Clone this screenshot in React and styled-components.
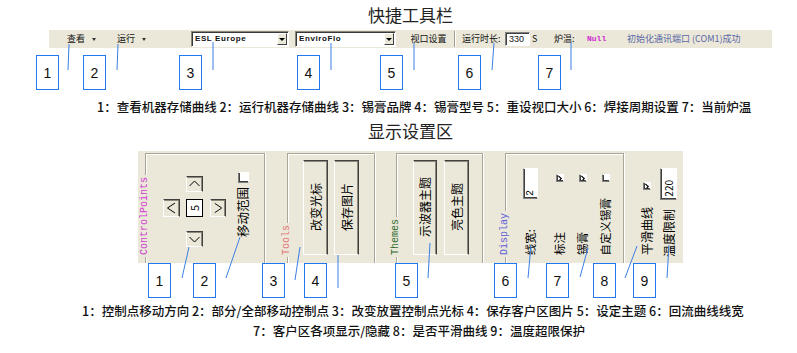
import React from 'react';
import styled, { createGlobalStyle } from 'styled-components';

const BEIGE = '#ebe8d9';
const CJK = '"Noto Sans CJK SC", "Liberation Sans", sans-serif';

const GlobalStyle = createGlobalStyle`
  html, body { margin: 0; padding: 0; background: #fff; }
  body { width: 797px; height: 353px; overflow: hidden; font-family: ${CJK}; color: #111; }
`;

const Page = styled.div`
  position: relative;
  width: 797px;
  height: 353px;
  display: flex;
  flex-direction: column;
`;

const Title = styled.h1`
  margin: ${p => p.$mt}px 0 0 0;
  padding-left: 24px;
  font-family: ${CJK};
  font-size: 17px;
  line-height: 17px;
  font-weight: 400;
  color: #222;
  text-align: center;
`;

const Caption = styled.p`
  margin: ${p => p.$mt}px 0 0 ${p => p.$ml}px;
  font-family: ${CJK};
  font-size: 12.5px;
  font-weight: 500;
  line-height: 14px;
  color: #111;
  white-space: nowrap;
`;

/* ---------- toolbar ---------- */
const Toolbar = styled.div`
  margin: 7px 0 0 49px;
  width: 723px;
  height: 18px;
  background: ${BEIGE};
  display: flex;
  align-items: center;
  font-size: 9px;
  line-height: 10px;
`;

const ToolItem = styled.div`
  flex: none;
  margin-left: ${p => p.$ml}px;
  width: ${p => (p.$w ? `${p.$w}px` : 'auto')};
  display: flex;
  align-items: center;
  justify-content: ${p => (p.$center ? 'center' : 'flex-start')};
  color: ${p => p.$color || '#111'};
  white-space: nowrap;
`;

const MenuArrow = styled.span`
  margin-left: 7px;
  width: 0;
  height: 0;
  border-left: 2px solid transparent;
  border-right: 2px solid transparent;
  border-top: 3px solid #333;
`;

const Combo = styled.div`
  flex: none;
  box-sizing: border-box;
  margin-left: ${p => p.$ml}px;
  width: ${p => p.$w}px;
  height: 16px;
  background: #fff;
  border: 1px solid;
  border-color: #8a887c #fff #fff #8a887c;
  box-shadow: inset 1px 1px 0 #3a3a3a;
  display: flex;
  align-items: center;
`;

const ComboText = styled.span`
  flex: 1;
  padding-left: 3px;
  font-family: "Liberation Sans", sans-serif;
  font-weight: 700;
  font-size: 8px;
  letter-spacing: 0.6px;
  color: #111;
`;

const ComboButton = styled.span`
  box-sizing: border-box;
  width: 10px;
  height: 12px;
  margin-right: 1px;
  background: ${BEIGE};
  border: 1px solid;
  border-color: #fff #404040 #404040 #fff;
  display: flex;
  align-items: center;
  justify-content: center;
  &::after {
    content: '';
    border-left: 3px solid transparent;
    border-right: 3px solid transparent;
    border-top: 3px solid #000;
  }
`;

const Separator = styled.span`
  flex: none;
  margin-left: ${p => p.$ml}px;
  width: 1px;
  height: 16px;
  background: #a19e8f;
  border-right: 1px solid #fff;
`;

const SmallInput = styled.span`
  flex: none;
  box-sizing: border-box;
  width: 25px;
  height: 14px;
  background: #fff;
  border: 1px solid;
  border-color: #808080 #fff #fff #808080;
  box-shadow: inset 1px 1px 0 #404040;
  padding-left: 3px;
  font-family: "Liberation Sans", sans-serif;
  font-size: 9px;
  line-height: 12px;
`;

const MonoBold = styled.span`
  font-family: "Liberation Mono", monospace;
  font-weight: 700;
  font-size: 8px;
  color: #d22bd2;
`;

/* ---------- callouts ---------- */
const CalloutRow = styled.div`
  display: flex;
  margin-top: ${p => p.$mt}px;
  height: 35px;
`;

const Callout = styled.div`
  flex: none;
  box-sizing: border-box;
  width: 23px;
  height: 35px;
  margin-left: ${p => p.$ml}px;
  border: 1.5px solid #2277f2;
  background: #fff;
  display: flex;
  align-items: center;
  justify-content: center;
  font-family: "Liberation Sans", sans-serif;
  font-size: 14px;
  color: #111;
`;

const Leaders = styled.svg`
  position: absolute;
  left: 0;
  top: 0;
  pointer-events: none;
`;

/* ---------- display panel ---------- */
const Panel = styled.div`
  box-sizing: border-box;
  margin: 12px 0 0 138px;
  width: 545px;
  height: 112px;
  padding: 2px 0 0 7px;
  background: ${BEIGE};
  display: flex;
`;

const Group = styled.div`
  position: relative;
  box-sizing: border-box;
  flex: none;
  width: ${p => p.$w}px;
  margin-left: ${p => p.$ml}px;
  padding: ${p => p.$pad};
  border: 1px solid #a9a697;
  border-bottom: none;
  box-shadow: inset 1px 1px 0 #fff, 1px 0 0 #fff;
  display: flex;
  align-items: flex-start;
  gap: ${p => p.$gap || 0}px;
`;

const Loose = styled.div`
  box-sizing: border-box;
  flex: none;
  width: 59px;
  padding-left: 17px;
  display: flex;
`;

const VText = styled.span`
  writing-mode: vertical-rl;
  text-orientation: sideways;
  transform: rotate(180deg);
  white-space: nowrap;
  font-family: ${p => (p.$mono ? '"Liberation Mono", monospace' : CJK)};
  font-size: ${p => p.$size || 12}px;
  line-height: ${p => p.$lh || p.$size || 12}px;
  color: ${p => p.$color || '#000'};
`;

const Legend = styled(VText)`
  position: absolute;
  left: -6px;
  bottom: 6px;
  padding: 2px 0;
  background: ${BEIGE};
`;

const RaisedButton = styled.div`
  box-sizing: border-box;
  flex: none;
  width: ${p => p.$w}px;
  height: ${p => p.$h}px;
  background: ${BEIGE};
  border: 1px solid;
  border-color: #404040 #404040 #fff #fff;
  box-shadow: inset -1px 1px 0 #8d8a7c;
  display: flex;
  align-items: center;
  justify-content: center;
`;

const DPad = styled.div`
  margin-top: 4px;
  display: grid;
  grid-template-columns: 17px 6px 17px 7px 16px;
  grid-template-rows: 16px 7px 18px 14px 16px;
`;

const PadCell = styled.div`
  grid-column: ${p => p.$col};
  grid-row: ${p => p.$row};
  display: flex;
`;

const ValueBox = styled.div`
  box-sizing: border-box;
  width: 17px;
  height: 18px;
  background: #fff;
  border: 1px solid #000;
  display: flex;
  align-items: center;
  justify-content: center;
`;

const Field = styled.div`
  flex: none;
  box-sizing: border-box;
  width: ${p => p.$w}px;
  margin-left: ${p => p.$ml || 0}px;
  padding-top: ${p => p.$pt || 0}px;
  padding-bottom: ${p => p.$pb ?? 8}px;
  align-self: ${p => (p.$top ? 'flex-start' : 'stretch')};
  display: flex;
  flex-direction: column;
  align-items: center;
  justify-content: ${p => (p.$top ? 'flex-start' : 'space-between')};
  gap: ${p => p.$gap || 0}px;
`;

const CheckBox = styled.span`
  box-sizing: border-box;
  flex: none;
  width: ${p => p.$s}px;
  height: ${p => p.$s}px;
  background: #fff;
  border: 1px solid;
  border-color: #fff #fff #808080 #808080;
  box-shadow: inset 1px -1px 0 #404040;
  display: flex;
  align-items: center;
  justify-content: center;
`;

const Sunken = styled.div`
  box-sizing: border-box;
  flex: none;
  width: ${p => p.$w}px;
  height: ${p => p.$h}px;
  background: #fff;
  border: 1px solid;
  border-color: #fff #fff #808080 #808080;
  box-shadow: inset 1px -1px 0 #404040;
  display: flex;
  flex-direction: column;
  justify-content: flex-end;
  align-items: center;
  padding-bottom: 2px;
`;

const Check = () => (
  <svg width="8" height="8" viewBox="0 0 8 8">
    <polyline points="1.8,1.2 5.6,4.6 3.6,6.8" fill="none" stroke="#000" strokeWidth="1.6" />
  </svg>
);

const Chevron = ({ pts }) => (
  <svg width="15" height="14" viewBox="0 0 15 14">
    <polyline points={pts} fill="none" stroke="#000" strokeWidth="1" />
  </svg>
);

const row1 = [36, 24, 73, 95, 60, 55, 57];
const row2 = [148, 22, 46, 19, 68, 76, 29, 24, 17];

const lines = [
  [69, 44, 68, 70], [118, 44, 117, 70], [213, 42, 213, 70], [331, 43, 331, 70],
  [414, 43, 414, 70], [494, 43, 492, 70], [571, 42, 571, 70],
  [182, 278, 189, 247], [226, 278, 240, 237], [295, 280, 300, 247], [338, 288, 338, 255],
  [428, 278, 430, 243], [528, 278, 531, 245], [580, 277, 588, 248], [625, 278, 637, 246],
  [667, 278, 669, 245],
];

export default function App() {
  return (
    <Page>
      <GlobalStyle />
      <Title $mt={6}>快捷工具栏</Title>

      <Toolbar>
        <ToolItem $ml={18} $w={40}>查看<MenuArrow /></ToolItem>
        <ToolItem $ml={10} $w={40}>运行<MenuArrow /></ToolItem>
        <Combo $ml={34} $w={98}><ComboText>ESL Europe</ComboText><ComboButton /></Combo>
        <Combo $ml={6} $w={101}><ComboText>EnviroFlo</ComboText><ComboButton /></Combo>
        <ToolItem $ml={8} $w={49} $center>视口设置</ToolItem>
        <Separator $ml={1} />
        <ToolItem $ml={6} $w={43}>运行时长:</ToolItem>
        <SmallInput>330</SmallInput>
        <ToolItem $ml={2} $w={6}>S</ToolItem>
        <ToolItem $ml={16} $w={24}>炉温:</ToolItem>
        <ToolItem $ml={9} $w={20}><MonoBold>Null</MonoBold></ToolItem>
        <ToolItem $ml={20} $color="#5a67a6">初始化通讯端口 (COM1)成功</ToolItem>
      </Toolbar>

      <CalloutRow $mt={7}>
        {row1.map((m, i) => <Callout key={i} $ml={m}>{i + 1}</Callout>)}
      </CalloutRow>

      <Caption $mt={10} $ml={97}>
        1：查看机器存储曲线 2：运行机器存储曲线 3：锡膏品牌 4：锡膏型号 5：重设视口大小 6：焊接周期设置 7：当前炉温
      </Caption>

      <Title $mt={8}>显示设置区</Title>

      <Panel>
        <Group $w={120} $ml={0} $pad="18px 0 0 17px">
          <Legend $mono $size={10} $lh={10} $color="#d040cf">ControlPoints</Legend>
          <DPad>
            <PadCell $col={3} $row={1}>
              <RaisedButton $w={17} $h={16}><Chevron pts="2.5,9 7.5,4 12.5,9" /></RaisedButton>
            </PadCell>
            <PadCell $col={1} $row={3}>
              <RaisedButton $w={17} $h={18}><Chevron pts="11,2 3.5,7 11,12" /></RaisedButton>
            </PadCell>
            <PadCell $col={3} $row={3}>
              <ValueBox><VText $size={11} $lh={11}>5</VText></ValueBox>
            </PadCell>
            <PadCell $col={5} $row={3}>
              <RaisedButton $w={16} $h={18}><Chevron pts="4,2 11.5,7 4,12" /></RaisedButton>
            </PadCell>
            <PadCell $col={3} $row={5}>
              <RaisedButton $w={17} $h={16}><Chevron pts="2.5,5 7.5,10 12.5,5" /></RaisedButton>
            </PadCell>
          </DPad>
          <Field $w={14} $ml={10} $pb={0} $gap={4} $top>
            <CheckBox $s={11} />
            <VText $size={12.5} $lh={14}>移动范围</VText>
          </Field>
        </Group>

        <Group $w={88} $ml={22} $pad="6px 0 0 15px" $gap={6}>
          <Legend $mono $size={10} $lh={10} $color="#e47676">Tools</Legend>
          <RaisedButton $w={25} $h={95}><VText $size={12}>改变光标</VText></RaisedButton>
          <RaisedButton $w={25} $h={95}><VText $size={12}>保存图片</VText></RaisedButton>
        </Group>

        <Group $w={87} $ml={21} $pad="6px 0 0 16px" $gap={7}>
          <Legend $mono $size={10} $lh={10} $color="#2d6a2d">Themes</Legend>
          <RaisedButton $w={24} $h={95}><VText $size={12}>示波器主题</VText></RaisedButton>
          <RaisedButton $w={25} $h={95}><VText $size={12}>亮色主题</VText></RaisedButton>
        </Group>

        <Group $w={119} $ml={22} $pad="14px 0 0 17px">
          <Legend $mono $size={10} $lh={10} $color="#6262d6">Display</Legend>
          <Field $w={15}>
            <Sunken $w={15} $h={31}><VText $size={10} $lh={10} $mono>2</VText></Sunken>
            <VText $size={11.5}>线宽:</VText>
          </Field>
          <Field $w={11} $ml={16} $pt={6}>
            <CheckBox $s={8}><Check /></CheckBox>
            <VText $size={11.5}>标注</VText>
          </Field>
          <Field $w={11} $ml={12} $pt={6}>
            <CheckBox $s={8}><Check /></CheckBox>
            <VText $size={11.5}>锡膏</VText>
          </Field>
          <Field $w={12} $ml={12} $pt={6}>
            <CheckBox $s={8} />
            <VText $size={11.5}>自定义锡膏</VText>
          </Field>
        </Group>

        <Loose>
          <Field $w={12} $pt={29}>
            <CheckBox $s={8}><Check /></CheckBox>
            <VText $size={12}>平滑曲线</VText>
          </Field>
          <Field $w={17} $ml={7} $pt={15} $pb={6}>
            <Sunken $w={17} $h={32}><VText $size={10} $lh={11}>220</VText></Sunken>
            <VText $size={12}>温度限制</VText>
          </Field>
        </Loose>
      </Panel>

      <CalloutRow $mt={0}>
        {row2.map((m, i) => <Callout key={i} $ml={m}>{i + 1}</Callout>)}
      </CalloutRow>

      <Caption $mt={6} $ml={82}>
        1：控制点移动方向 2：部分/全部移动控制点 3：改变放置控制点光标 4：保存客户区图片 5：设定主题 6：回流曲线线宽
      </Caption>
      <Caption $mt={6} $ml={253}>
        7：客户区各项显示/隐藏 8：是否平滑曲线 9：温度超限保护
      </Caption>

      <Leaders width="797" height="353" viewBox="0 0 797 353">
        {lines.map(([x1, y1, x2, y2], i) => (
          <line key={i} x1={x1} y1={y1} x2={x2} y2={y2} stroke="#3a7fe6" strokeWidth="1" />
        ))}
      </Leaders>
    </Page>
  );
}
